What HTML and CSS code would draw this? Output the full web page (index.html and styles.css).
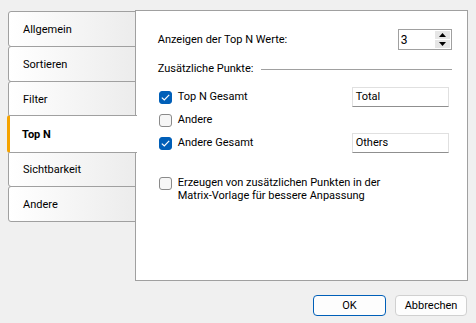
FILE: index.html
```html
<!DOCTYPE html>
<html>
<head>
<meta charset="utf-8">
<link rel="stylesheet" href="styles.css">
</head>
<body>
<div class="dialog">
  <div class="main">
    <div class="tabs">
      <div class="tab">Allgemein</div>
      <div class="tab">Sortieren</div>
      <div class="tab">Filter</div>
      <div class="tab active">Top N</div>
      <div class="tab">Sichtbarkeit</div>
      <div class="tab">Andere</div>
    </div>
    <div class="panel">
      <div class="row top-row">
        <span class="label">Anzeigen der Top N Werte:</span>
        <div class="spin">
          <span class="spin-val">3</span>
          <div class="spin-btns">
            <div class="spin-btn"><svg width="7" height="4" viewBox="0 0 7 4"><path d="M0 4 L3.5 0 L7 4 Z" fill="#000"/></svg></div>
            <div class="spin-btn"><svg width="7" height="4" viewBox="0 0 7 4"><path d="M0 0 L3.5 4 L7 0 Z" fill="#000"/></svg></div>
          </div>
        </div>
      </div>
      <div class="group">
        <span class="label">Zusätzliche Punkte:</span>
        <span class="group-line"></span>
      </div>
      <div class="checks">
        <div class="check-row">
          <span class="cb checked"><svg width="9" height="7" viewBox="0 0 9 7"><path d="M0.8 3.6 L3.3 6 L8.2 0.9" fill="none" stroke="#fff" stroke-width="1.2"/></svg></span>
          <span class="label cb-label">Top N Gesamt</span>
          <span class="input">Total</span>
        </div>
        <div class="check-row">
          <span class="cb"></span>
          <span class="label cb-label">Andere</span>
        </div>
        <div class="check-row">
          <span class="cb checked"><svg width="9" height="7" viewBox="0 0 9 7"><path d="M0.8 3.6 L3.3 6 L8.2 0.9" fill="none" stroke="#fff" stroke-width="1.2"/></svg></span>
          <span class="label cb-label">Andere Gesamt</span>
          <span class="input">Others</span>
        </div>
      </div>
      <div class="check-multi">
        <span class="cb"></span>
        <span class="label cb-label multi">Erzeugen von zusätzlichen Punkten in der<br>Matrix-Vorlage für bessere Anpassung</span>
      </div>
    </div>
  </div>
  <div class="buttons">
    <button class="btn default">OK</button>
    <button class="btn">Abbrechen</button>
  </div>
</div>
</body>
</html>
```

FILE: styles.css
```css
html, body {
  margin: 0;
  padding: 0;
  background: #f0f0f0;
  width: 476px;
  height: 323px;
  overflow: hidden;
  font-family: Roboto, "Noto Sans", sans-serif;
  font-size: 11px;
  color: #000;
}
.dialog {
  padding: 10px 8px 0 8px;
}
.main {
  display: flex;
  align-items: flex-start;
}
.tabs {
  display: flex;
  flex-direction: column;
  width: 128px;
  margin-top: 1px;
  position: relative;
  z-index: 2;
}
.tab {
  height: 34px;
  border: 1px solid #a0a0a0;
  border-radius: 3px 0 0 3px;
  margin-top: -1px;
  background: linear-gradient(to right, #ffffff, #ececec);
  display: flex;
  align-items: center;
  padding-left: 14px;
  box-sizing: content-box;
}
.tab:first-child { margin-top: 0; }
.tab.active {
  background: #fff;
  font-weight: bold;
  border-left: 3px solid #f5a300;
  border-right: none;
  margin-left: -1px;
  margin-right: -1px;
  height: 36px;
  margin-top: -2px;
  margin-bottom: -1px;
  padding-left: 12px;
  padding-right: 1px;
  position: relative;
  z-index: 3;
}
.panel {
  width: 310px;
  height: 269px;
  border: 1px solid #a0a0a0;
  background: #fff;
  margin-left: -1px;
  padding: 0 0 0 22px;
  box-sizing: content-box;
  position: relative;
  z-index: 1;
}
.label { white-space: nowrap; line-height: 14px; }
.top-row {
  display: flex;
  align-items: center;
  justify-content: space-between;
  margin-top: 18px;
  width: 294px;
}
.spin {
  width: 52px;
  height: 19px;
  border: 1px solid #a0a0a0;
  display: flex;
  align-items: center;
  justify-content: space-between;
  background: #fff;
}
.spin-val { padding-left: 2px; line-height: 14px; font-size: 12px; }
.spin-btns {
  display: flex;
  flex-direction: column;
  gap: 1px;
  margin-right: 1px;
}
.spin-btn {
  width: 15px;
  height: 8px;
  background: #e6e6e6;
  display: flex;
  align-items: center;
  justify-content: center;
}
.group {
  display: flex;
  align-items: center;
  margin-top: 12px;
  width: 294px;
}
.group-line {
  flex: 1;
  height: 1px;
  background: #a0a0a0;
  margin-left: 8px;
}
.checks {
  margin-top: 11px;
  display: flex;
  flex-direction: column;
  gap: 3px;
}
.check-row {
  display: flex;
  align-items: center;
  height: 20px;
  position: relative;
}
.cb {
  width: 11px;
  height: 11px;
  border: 1px solid #8a8a8a;
  border-radius: 3px;
  background: #f6f6f6;
  margin-left: 1px;
  display: inline-flex;
  align-items: center;
  justify-content: center;
  flex: none;
}
.cb.checked {
  background: #005fb8;
  border-color: #005fb8;
}
.cb-label { margin-left: 6px; }
.input {
  position: absolute;
  left: 194px;
  top: 0;
  width: 92px;
  height: 18px;
  border: 1px solid #e0e0e0;
  border-bottom-color: #8f8f8f;
  background: #fff;
  display: flex;
  align-items: center;
  padding-left: 3px;
  line-height: 14px;
}
.check-multi {
  display: flex;
  align-items: flex-start;
  margin-top: 23px;
}
.check-multi .cb { margin-top: 1px; }
.label.multi { line-height: 13px; white-space: normal; }
.buttons {
  display: flex;
  justify-content: flex-end;
  gap: 9px;
  margin-top: 14px;
  padding-right: 1px;
}
.btn {
  font-family: inherit;
  font-size: 11px;
  height: 21px;
  width: 72px;
  border: 1px solid #d0d0d0;
  border-radius: 4px;
  background: #fdfdfd;
  color: #000;
  padding: 0;
  line-height: 14px;
}
.btn.default {
  border-color: #005fb8;
  width: 73px;
}
```
